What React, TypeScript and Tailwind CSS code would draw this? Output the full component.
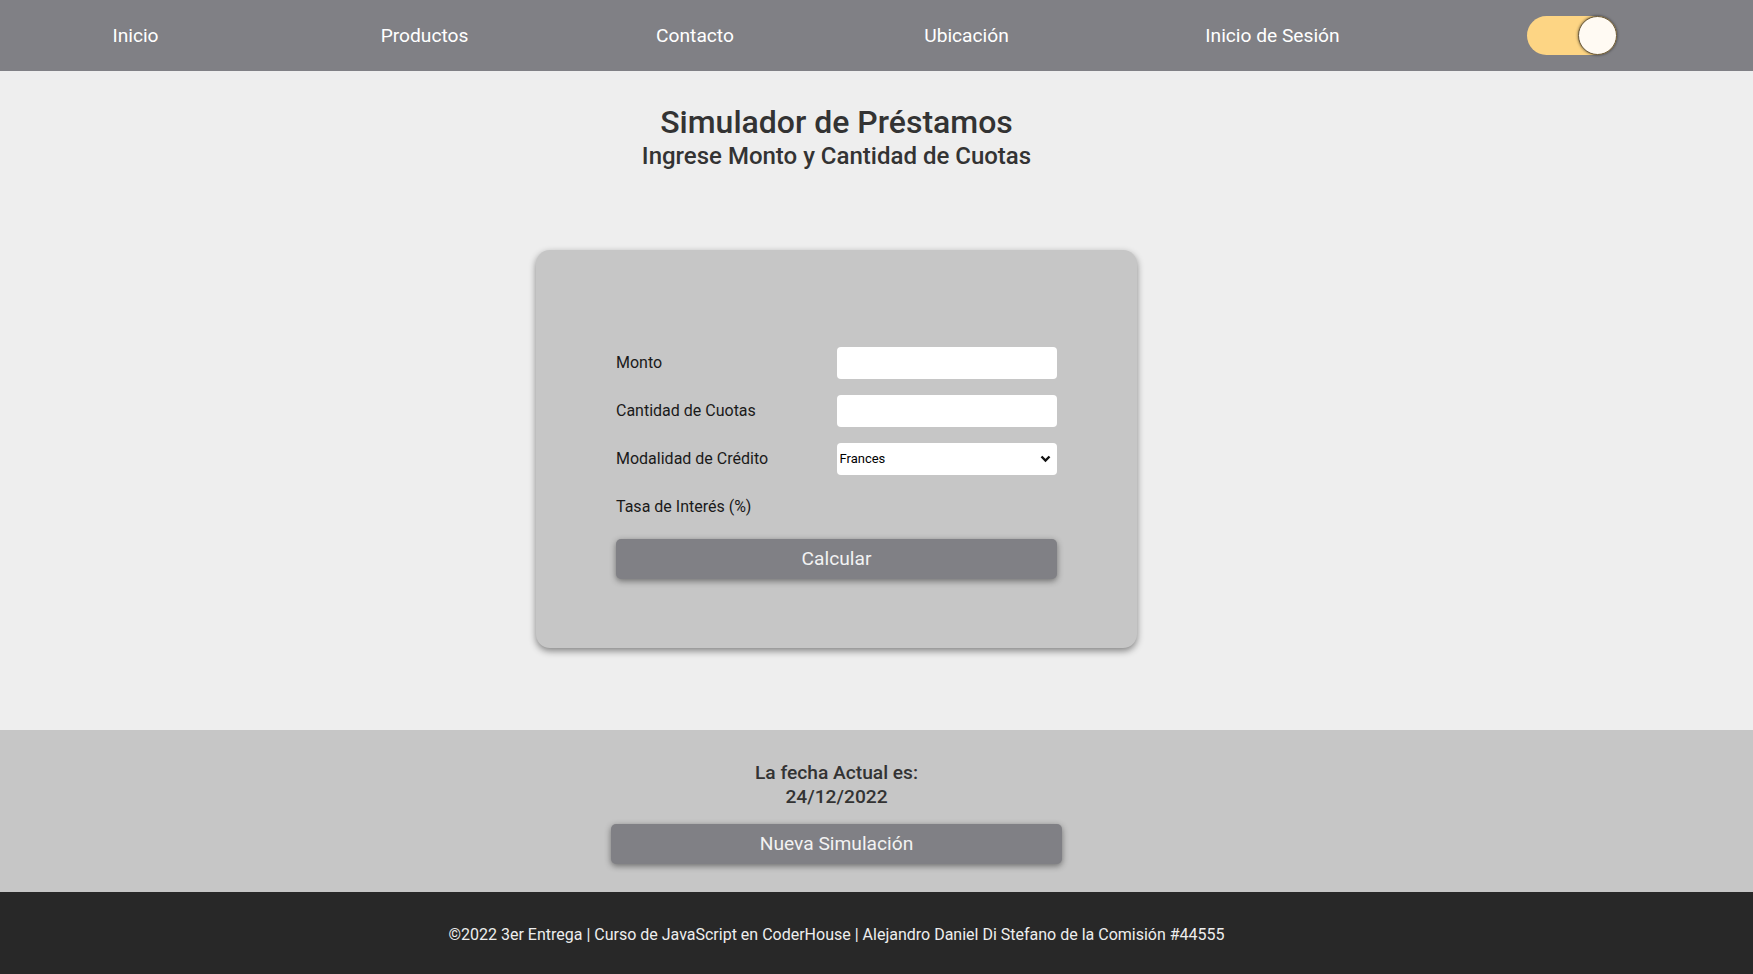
export default function App() {
  const navItems = [
    { label: "Inicio", w: "w-[271px]" },
    { label: "Productos", w: "w-[307px]" },
    { label: "Contacto", w: "w-[234px]" },
    { label: "Ubicación", w: "w-[309px]" },
    { label: "Inicio de Sesión", w: "w-[303px]" },
  ];

  return (
    <div className="min-h-screen bg-[#eeeeee] font-['Roboto',sans-serif]">
      {/* navbar */}
      <header className="h-[71px] bg-[#808085]">
        <nav className="flex h-full items-center">
          {navItems.map((item) => (
            <div key={item.label} className={`${item.w} pt-[2px] text-center`}>
              <a href="#" className="text-[19.2px] text-white">
                {item.label}
              </a>
            </div>
          ))}
          <div className="flex w-[296px] justify-center">
            <div className="flex h-[39px] w-[90px] items-center justify-end rounded-full bg-[#fdd584]">
              <div className="h-[39px] w-[39px] rounded-full border border-[#6b5a3a] bg-[#fffaf3] shadow-[0_0_3px_rgba(0,0,0,0.6)]" />
            </div>
          </div>
        </nav>
      </header>

      {/* main */}
      <main className="pr-[80px] pt-[33px] pb-[82px]">
        <div className="text-center text-[#333333]">
          <h1 className="text-[32px] font-medium leading-[36px]">Simulador de Préstamos</h1>
          <h2 className="mt-[2px] text-[24px] font-medium leading-[28px]">
            Ingrese Monto y Cantidad de Cuotas
          </h2>
        </div>

        <div className="mx-auto mt-[80px] h-[398px] w-[601px] rounded-[14px] bg-[#c6c6c6] px-[80px] pt-[97px] shadow-[0_3px_7px_rgba(0,0,0,0.45)]">
          <form className="flex flex-col gap-[16px]" onSubmit={(e) => e.preventDefault()}>
            <div className="grid h-[32px] grid-cols-2 items-center">
              <label className="text-[16px] text-[#1a1a1a]">Monto</label>
              <input className="h-[32px] w-[220px] rounded-[4px] bg-white px-2 outline-none" />
            </div>
            <div className="grid h-[32px] grid-cols-2 items-center">
              <label className="text-[16px] text-[#1a1a1a]">Cantidad de Cuotas</label>
              <input className="h-[32px] w-[220px] rounded-[4px] bg-white px-2 outline-none" />
            </div>
            <div className="grid h-[32px] grid-cols-2 items-center">
              <label className="text-[16px] text-[#1a1a1a]">Modalidad de Crédito</label>
              <div className="relative w-[220px]">
                <select className="h-[32px] w-full appearance-none rounded-[4px] bg-white pl-[3px] text-[13px] text-black outline-none">
                  <option>Frances</option>
                  <option>Aleman</option>
                </select>
                <svg
                  className="pointer-events-none absolute right-[6px] top-[12px]"
                  width="11"
                  height="8"
                  viewBox="0 0 11 8"
                >
                  <path d="M1.5 1.5 L5.5 5.5 L9.5 1.5" stroke="#111" strokeWidth="2.4" fill="none" />
                </svg>
              </div>
            </div>
            <div className="grid h-[32px] grid-cols-2 items-center">
              <label className="text-[16px] text-[#1a1a1a]">Tasa de Interés (%)</label>
              <span />
            </div>
            <button className="h-[40px] w-full rounded-[5px] bg-[#808085] text-[19.2px] text-[#f2f2f2] shadow-[0_2px_6px_rgba(0,0,0,0.45)]">
              Calcular
            </button>
          </form>
        </div>
      </main>

      {/* fecha */}
      <section className="bg-[#c6c6c6] pr-[80px] pt-[31px] pb-[28px]">
        <div className="text-center text-[19.2px] font-medium leading-[24px] text-[#333333]">
          <p>La fecha Actual es:</p>
          <p>24/12/2022</p>
        </div>
        <button className="mx-auto mt-[15px] block h-[40px] w-[451px] rounded-[5px] bg-[#808085] text-[19.2px] text-[#f2f2f2] shadow-[0_2px_6px_rgba(0,0,0,0.45)]">
          Nueva Simulación
        </button>
      </section>

      {/* footer */}
      <footer className="flex h-[82px] items-center justify-center bg-[#282828] pr-[80px] pt-[3px]">
        <p className="text-[16px] text-[#eeeeee]">
          ©2022 3er Entrega | Curso de JavaScript en CoderHouse | Alejandro Daniel Di Stefano de la Comisión #44555
        </p>
      </footer>
    </div>
  );
}
